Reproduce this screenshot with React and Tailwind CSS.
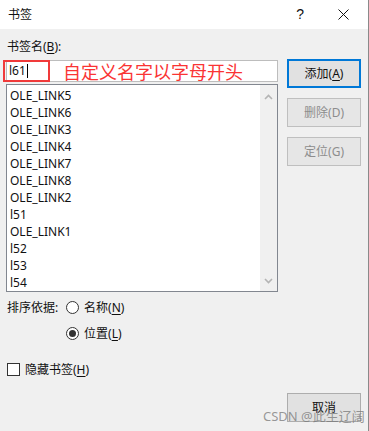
const font = "font-['Noto_Sans','Noto_Sans_CJK_SC',sans-serif]";

const items = [
  "OLE_LINK5",
  "OLE_LINK6",
  "OLE_LINK3",
  "OLE_LINK4",
  "OLE_LINK7",
  "OLE_LINK8",
  "OLE_LINK2",
  "l51",
  "OLE_LINK1",
  "l52",
  "l53",
  "l54",
];

// win-style push button
const DlgButton = ({ label, keyChar, primary, disabled, className = "" }) => (
  <button
    type="button"
    className={`h-[29px] w-full flex items-center justify-center text-[12px] leading-none ${
      primary
        ? "border-2 border-[#0078d7] bg-[#e1e1e1] text-[#111]"
        : disabled
        ? "border border-[#bfbfbf] bg-[#e6e6e6] text-[#8d8d8d]"
        : "border border-[#adadad] bg-[#e1e1e1] text-[#111]"
    } ${className}`}
  >
    {label}
    {keyChar && (
      <span>
        (<span className={disabled ? "" : "underline underline-offset-2"}>{keyChar}</span>)
      </span>
    )}
  </button>
);

const Radio = ({ checked, label, keyChar }) => (
  <div className="flex items-center gap-[5px] h-[17px]">
    <span className="w-[13px] h-[13px] rounded-full border border-[#333] bg-white flex items-center justify-center">
      {checked && <span className="w-[7px] h-[7px] rounded-full bg-[#333]" />}
    </span>
    <span className="text-[12px] leading-[17px] text-[#111]">
      {label}(<span className="underline underline-offset-2">{keyChar}</span>)
    </span>
  </div>
);

export default function App() {
  return (
    <div className={`relative w-[369px] h-[431px] flex flex-col border-r border-[#8a8a8a] ${font}`}>
      {/* title bar */}
      <div className="h-[29px] bg-white flex items-center justify-between pl-[8px] pr-[19px]">
        <span className="text-[12px] text-[#111]">书签</span>
        <div className="flex items-center gap-[34px]">
          <span className="text-[14px] text-[#111] font-['Liberation_Sans',sans-serif]">?</span>
          <svg width="11" height="11" viewBox="0 0 11 11">
            <path d="M0.5 0.5 L10.5 10.5 M10.5 0.5 L0.5 10.5" stroke="#111" strokeWidth="1" />
          </svg>
        </div>
      </div>

      {/* body */}
      <div className="flex-1 bg-[#f0f0f0] flex pl-[6px] pr-[6px] gap-[9px]">
        <div className="w-[272px] flex flex-col pt-[9px]">
          <div className="h-[17px] leading-[17px] text-[12px] text-[#111] pl-[1px]">
            书签名(<span className="underline underline-offset-2">B</span>):
          </div>

          <div className="relative mt-[5px] h-[22px] bg-white border border-[#bdbdbd] flex items-center pl-[2px]">
            <span className="text-[12px] text-[#111] leading-none">l61</span>
            <span className="w-[1px] h-[14px] bg-black ml-[1px]" />
            <div className="absolute left-[-4px] top-[-1px] w-[47px] h-[22px] border-2 border-[#f03a3a]" />
            <span className="absolute left-[56px] top-[1px] text-[18px] leading-[20px] text-[#fa3434]">
              自定义名字以字母开头
            </span>
          </div>

          <div className="mt-[2px] h-[208px] bg-white border border-[#828790] flex">
            <ul className="flex-1 pt-[2px] pl-[3px]">
              {items.map((it) => (
                <li key={it} className="h-[17px] leading-[17px] text-[12px] text-[#111]">
                  {it}
                </li>
              ))}
            </ul>
            <div className="w-[17px] bg-[#f0f0f0] flex flex-col items-center justify-between pt-[9px] pb-[7px]">
              <svg width="9" height="6" viewBox="0 0 9 6">
                <path d="M1 5 L4.5 1.5 L8 5" stroke="#b4b4b4" strokeWidth="1.6" fill="none" />
              </svg>
              <svg width="9" height="6" viewBox="0 0 9 6">
                <path d="M1 1 L4.5 4.5 L8 1" stroke="#b4b4b4" strokeWidth="1.6" fill="none" />
              </svg>
            </div>
          </div>

          <div className="mt-[7px] flex items-center">
            <span className="w-[60px] pl-[1px] text-[12px] leading-[17px] text-[#111]">排序依据:</span>
            <Radio label="名称" keyChar="N" />
          </div>
          <div className="mt-[9px] pl-[60px]">
            <Radio checked label="位置" keyChar="L" />
          </div>

          <div className="mt-[19px] flex items-center gap-[5px] h-[17px] pl-[1px]">
            <span className="w-[13px] h-[13px] border border-[#333] bg-white" />
            <span className="text-[12px] leading-[17px] text-[#111]">
              隐藏书签(<span className="underline underline-offset-2">H</span>)
            </span>
          </div>
        </div>

        <div className="w-[74px] flex flex-col pt-[30px] pb-[9px]">
          <DlgButton label="添加" keyChar="A" primary />
          <DlgButton label="删除" keyChar="D" disabled className="mt-[10px]" />
          <DlgButton label="定位" keyChar="G" disabled className="mt-[10px]" />
          <DlgButton label="取消" className="mt-auto" />
        </div>
      </div>

      {/* watermark */}
      <span className="absolute left-[263px] top-[406px] text-[13px] leading-[20px] text-[rgba(120,120,120,0.75)] pointer-events-none">
        CSDN @此生辽阔
      </span>
    </div>
  );
}
